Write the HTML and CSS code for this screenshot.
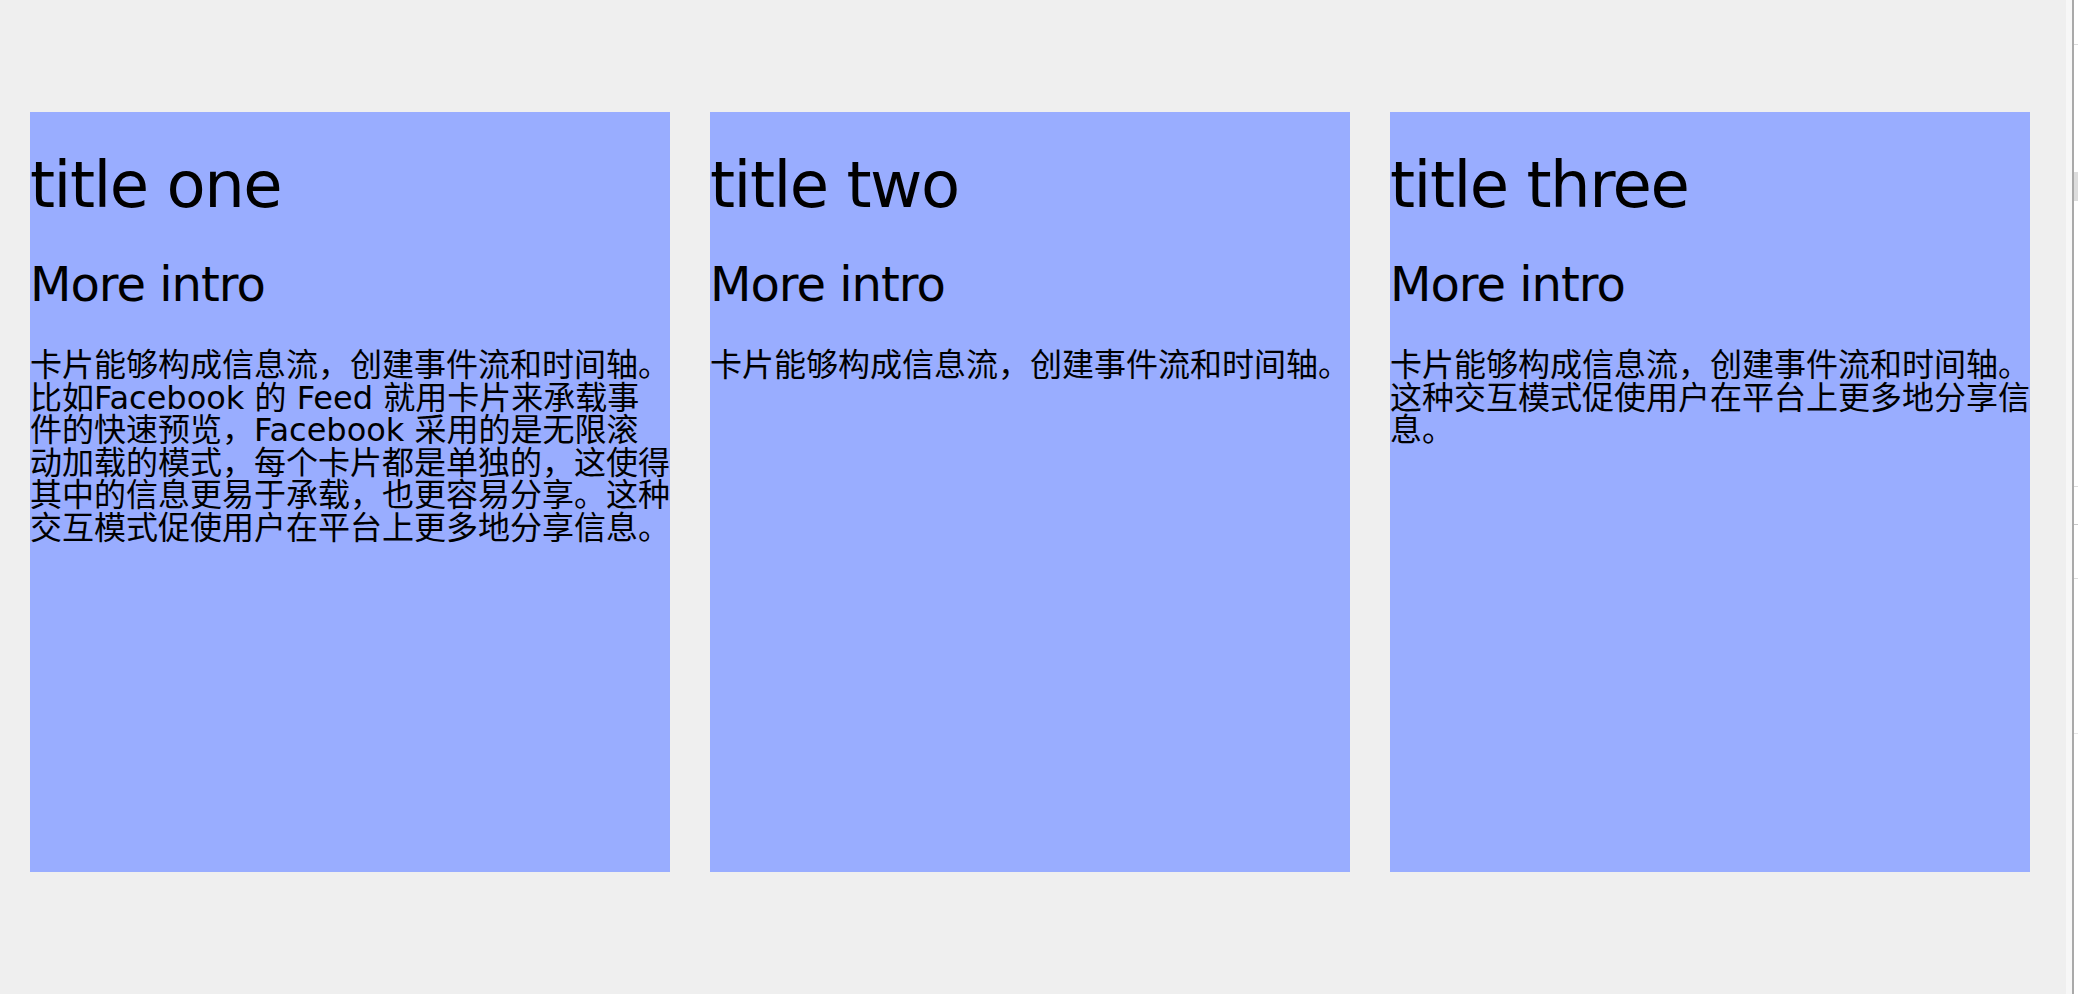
FILE: index.html
```html
<!DOCTYPE html>
<html lang="zh-CN">
<head>
<meta charset="utf-8">
<title>Cards</title>
<link rel="stylesheet" href="styles.css">
</head>
<body>
<div class="page">
  <main class="cards">
    <section class="card">
      <h1 class="card-title">title one</h1>
      <h2 class="card-sub">More intro</h2>
      <p class="card-text">卡片能够构成信息流，创建事件流和时间轴。比如Facebook 的 Feed 就用卡片来承载事件的快速预览，Facebook 采用的是无限滚动加载的模式，每个卡片都是单独的，这使得其中的信息更易于承载，也更容易分享。这种交互模式促使用户在平台上更多地分享信息。</p>
    </section>
    <section class="card">
      <h1 class="card-title">title two</h1>
      <h2 class="card-sub">More intro</h2>
      <p class="card-text">卡片能够构成信息流，创建事件流和时间轴。</p>
    </section>
    <section class="card">
      <h1 class="card-title">title three</h1>
      <h2 class="card-sub">More intro</h2>
      <p class="card-text">卡片能够构成信息流，创建事件流和时间轴。这种交互模式促使用户在平台上更多地分享信息。</p>
    </section>
  </main>
  <aside class="side">
    <div class="side-gap"></div>
    <div class="side-line"></div>
    <div class="side-panel">
      <div class="mark mark-a"></div>
      <div class="mark mark-b"></div>
      <div class="mark mark-c"></div>
      <div class="mark mark-d"></div>
      <div class="mark mark-e"></div>
      <div class="mark mark-f"></div>
    </div>
  </aside>
</div>
</body>
</html>
```

FILE: styles.css
```css
html, body {
  margin: 0;
  padding: 0;
  height: 100%;
  background: #efefef;
  overflow: hidden;
}

.page {
  display: flex;
  height: 994px;
}

.cards {
  flex: 1;
  display: flex;
  align-items: flex-start;
  gap: 40px;
  padding: 112px 0 0 30px;
}

.card {
  width: 640px;
  height: 760px;
  flex: none;
  background: #99adff;
  color: #000;
  font-family: "DejaVu Sans", "Noto Sans CJK SC", sans-serif;
  overflow: hidden;
}

.card-title {
  margin: 36px 0 0;
  font-size: 64px;
  line-height: 74px;
  font-weight: normal;
  letter-spacing: -1.5px;
}

.card-sub {
  margin: 34px 0 0;
  font-size: 48px;
  line-height: 56px;
  font-weight: normal;
  letter-spacing: -1px;
}

.card-text {
  margin: 37px 0 0;
  font-size: 32px;
  line-height: 32.5px;
}

.side {
  width: 12px;
  flex: none;
  display: flex;
}

.side-gap {
  width: 6px;
  background: #f7f7f7;
}

.side-line {
  width: 2px;
  background: #a9a9a9;
}

.side-panel {
  flex: 1;
  background: #ffffff;
  display: flex;
  flex-direction: column;
}

.mark {
  height: 1px;
  background: #dcdcdc;
}

.mark-a { margin-top: 44px; }
.mark-b { margin-top: 127px; height: 29px; background: #dddddd; }
.mark-c { margin-top: 285px; }
.mark-d { margin-top: 37px; background: #c8c8c8; }
.mark-e { margin-top: 53px; }
.mark-f { margin-top: 154px; background: #e6e6e6; }
```
